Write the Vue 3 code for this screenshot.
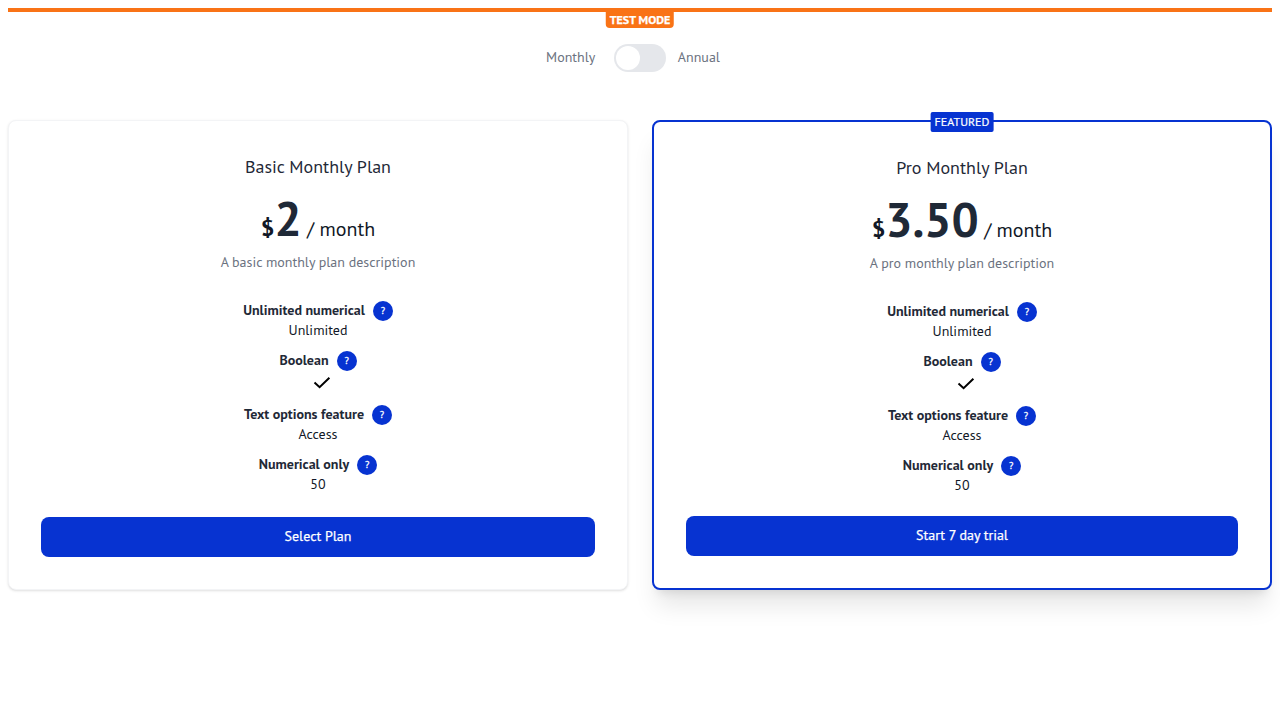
<script setup>
const features = [
  { name: 'Unlimited numerical', value: 'Unlimited' },
  { name: 'Boolean', value: true },
  { name: 'Text options feature', value: 'Access' },
  { name: 'Numerical only', value: '50' },
]

const plans = [
  { name: 'Basic Monthly Plan', price: '2', description: 'A basic monthly plan description', action: 'Select Plan', featured: false },
  { name: 'Pro Monthly Plan', price: '3.50', description: 'A pro monthly plan description', action: 'Start 7 day trial', featured: true },
]
</script>

<template>
  <div class="page">
    <div class="test-bar"><span class="test-label">TEST MODE</span></div>

    <div class="interval">
      <span class="choice">Monthly</span>
      <button class="toggle" type="button" aria-label="Billing interval"><span class="knob"></span></button>
      <span class="choice">Annual</span>
    </div>

    <div class="plans">
      <section v-for="plan in plans" :key="plan.name" class="card" :class="{ featured: plan.featured }">
        <span v-if="plan.featured" class="badge">FEATURED</span>
        <h2 class="name">{{ plan.name }}</h2>
        <div class="price">
          <span class="currency">$</span><span class="amount">{{ plan.price }}</span><span class="per">/ month</span>
        </div>
        <p class="description">{{ plan.description }}</p>
        <ul class="features">
          <li v-for="feature in features" :key="feature.name">
            <div class="label">{{ feature.name }}<span class="help">?</span></div>
            <div v-if="feature.value === true" class="check">
              <svg width="24" height="24" viewBox="0 0 24 24" fill="none" stroke="#000" stroke-width="2">
                <path d="M4.5 12.5 9.6 17.2 19.4 7.8" />
              </svg>
            </div>
            <div v-else class="value">{{ feature.value }}</div>
          </li>
        </ul>
        <button class="action" type="button">{{ plan.action }}</button>
      </section>
    </div>
  </div>
</template>

<style>
body {
  background: #fff;
}
</style>

<style scoped>
.page {
  box-sizing: border-box;
  min-height: 100vh;
  padding: 8px;
  font-family: "PT Sans", "Noto Sans", sans-serif;
  font-size: 14px;
  line-height: 20px;
  color: #111827;
}
.test-bar {
  position: relative;
  height: 4px;
  background: #f97316;
}
.test-label {
  position: absolute;
  top: 4px;
  left: 50%;
  transform: translateX(-50%);
  padding: 0 4px;
  border-radius: 0 0 4px 4px;
  background: #f97316;
  color: #fff;
  font-size: 12px;
  line-height: 16px;
  font-weight: 700;
  white-space: nowrap;
  -webkit-text-stroke: 0.25px #fff;
}
.interval {
  display: flex;
  align-items: center;
  justify-content: center;
  height: 28px;
  margin-top: 32px;
  padding-right: 14px;
  color: #6b7280;
}
.choice {
  padding-bottom: 2px;
}
.toggle {
  box-sizing: border-box;
  width: 52px;
  height: 28px;
  margin: 0 12px 0 18.5px;
  padding: 2px;
  border: 0;
  border-radius: 14px;
  background: #e5e7eb;
}
.knob {
  display: block;
  width: 24px;
  height: 24px;
  border-radius: 50%;
  background: #fff;
}
.plans {
  display: grid;
  grid-template-columns: 1fr 1fr;
  gap: 24px;
  height: 470px;
  margin-top: 48px;
}
.card {
  position: relative;
  box-sizing: border-box;
  display: flex;
  flex-direction: column;
  padding: 32px;
  border: 1px solid #f3f4f6;
  border-radius: 8px;
  background: #fff;
  text-align: center;
  box-shadow: 0 1px 3px rgba(0, 0, 0, 0.1), 0 1px 2px -1px rgba(0, 0, 0, 0.1);
}
.featured {
  border: 2px solid #0733d1;
  box-shadow: 0 20px 25px -5px rgba(0, 0, 0, 0.1), 0 8px 10px -6px rgba(0, 0, 0, 0.1);
}
.badge {
  position: absolute;
  top: -10px;
  left: 50%;
  transform: translateX(-50%);
  padding: 2px 4px;
  border-radius: 2px;
  background: #0733d1;
  color: #fff;
  font-size: 12px;
  line-height: 16px;
  -webkit-text-stroke: 0.2px #fff;
}
.name {
  margin: 0;
  font-size: 18px;
  line-height: 28px;
  font-weight: 400;
  color: #1f2937;
}
.price {
  display: flex;
  align-items: baseline;
  justify-content: center;
  height: 48px;
  margin-top: 13px;
  line-height: 48px;
}
.currency {
  font-size: 24px;
  font-weight: 700;
}
.amount {
  font-size: 48px;
  font-weight: 700;
  color: #1f2937;
}
.per {
  margin-left: 5.4px;
  font-size: 20px;
}
.description {
  margin: 10px 0 0;
  color: #6b7280;
}
.features {
  display: flex;
  flex-direction: column;
  gap: 10px;
  margin: 28px 0 0;
  padding: 0;
  list-style: none;
}
.label {
  display: flex;
  align-items: center;
  justify-content: center;
  gap: 8px;
  height: 20px;
  font-weight: 700;
  color: #1f2937;
}
.help {
  width: 20px;
  height: 20px;
  margin-top: 2px;
  border-radius: 50%;
  background: #0733d1;
  color: #fff;
  font-size: 10px;
  font-weight: 400;
  -webkit-text-stroke: 0.3px #fff;
}
.check {
  display: flex;
  justify-content: center;
  padding-left: 8px;
}
.action {
  height: 40px;
  margin-top: auto;
  padding: 0 0 2px;
  border: 0;
  border-radius: 8px;
  background: #0733d1;
  color: #fff;
  font: 500 14px/20px "PT Sans", "Noto Sans", sans-serif;
  -webkit-text-stroke: 0.25px #fff;
}
</style>
